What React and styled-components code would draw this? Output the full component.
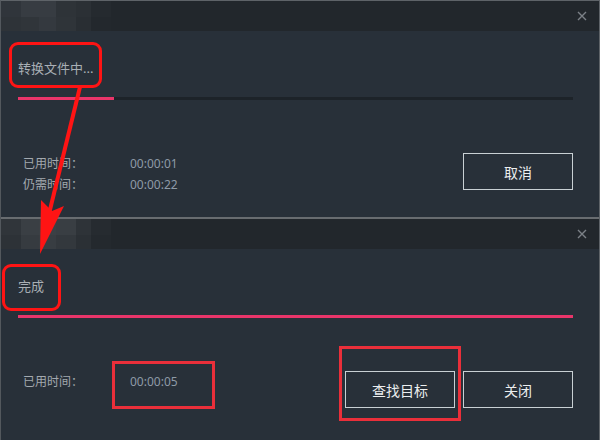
import React from "react";
import styled, { createGlobalStyle } from "styled-components";

const GlobalStyle = createGlobalStyle`
  html, body {
    margin: 0;
    padding: 0;
    background: #283039;
  }
  * {
    box-sizing: border-box;
  }
`;

const CJK = `"Noto Sans", "Noto Sans CJK SC", sans-serif`;

const Stage = styled.div`
  position: relative;
  width: 600px;
  height: 440px;
  overflow: hidden;
  display: flex;
  flex-direction: column;
  background: #283039;
  border-top: 1px solid #5e6368;
  border-left: 1px solid #53585d;
  border-right: 1px solid #5e6368;
  font-family: ${CJK};
`;

const Dialog = styled.div`
  height: ${(p) => p.$height}px;
  display: flex;
  flex-direction: column;
  border-bottom: ${(p) => (p.$divider ? "2px solid #686c70" : "none")};
`;

const TitleBar = styled.div`
  height: 30px;
  flex: none;
  display: flex;
  align-items: center;
  justify-content: space-between;
  background: #22272c;
  padding-right: 11px;
`;

const Mosaic = styled.div`
  display: grid;
  grid-template-columns: 20px 18px 17px 20px 15px 20px;
  grid-template-rows: 16px 14px;
  align-self: stretch;
`;

const Cell = styled.div`
  background: ${(p) => p.$c};
`;

const CloseButton = styled.button`
  border: none;
  background: none;
  padding: 0;
  width: 12px;
  height: 12px;
  display: flex;
  align-items: center;
  justify-content: center;
  color: #7b8187;
`;

const Body = styled.div`
  flex: 1;
  padding: 28px 26px 0 17px;
  display: flex;
  flex-direction: column;
`;

const Status = styled.div`
  font-size: 13px;
  line-height: 18px;
  color: #a9afb5;
`;

const Track = styled.div`
  margin-top: 20px;
  height: 3px;
  background: #1d2329;
`;

const Fill = styled.div`
  height: 100%;
  background: #e9356a;
`;

const Footer = styled.div`
  margin-top: 53px;
  display: flex;
  align-items: flex-start;
  justify-content: space-between;
`;

const Times = styled.div`
  display: grid;
  grid-template-columns: 107px auto;
  padding-left: 5px;
  font-size: 12px;
  line-height: 21px;
`;

const Label = styled.span`
  color: #a3a9af;
`;

const Value = styled.span`
  color: #8e9aa7;
`;

const Buttons = styled.div`
  display: flex;
  gap: 8px;
`;

const Button = styled.button`
  width: 110px;
  height: 37px;
  background: transparent;
  border: 1.5px solid #c9d0d4;
  color: #eceeef;
  font-family: ${CJK};
  font-size: 14px;
  padding: 0;
`;

const Overlay = styled.svg`
  position: absolute;
  left: -1px;
  top: -1px;
  pointer-events: none;
`;

const Mark = styled.div`
  position: absolute;
  left: ${(p) => p.$x}px;
  top: ${(p) => p.$y}px;
  width: ${(p) => p.$w}px;
  height: ${(p) => p.$h}px;
  border: 3px solid ${(p) => (p.$round ? "#ff1414" : "#ea2f3a")};
  border-radius: ${(p) => (p.$round ? "9px" : "0")};
  pointer-events: none;
`;

const mosaicTop = [
  "#30353b", "#373c42", "#373c42", "#2e3338", "#2b3035", "#252a2f",
  "#2e3338", "#30353a", "#34393f", "#2f3439", "#292e33", "#23282d",
];
const mosaicBottom = [
  "#30353a", "#3a3f44", "#3b4045", "#393e43", "#2e3338", "#262b30",
  "#2d3237", "#363b40", "#383d42", "#33383d", "#2b3035", "#24292e",
];

const Close = () => (
  <CloseButton>
    <svg width="10" height="10" viewBox="0 0 10 10">
      <path d="M1 1L9 9M9 1L1 9" stroke="currentColor" strokeWidth="1.4" />
    </svg>
  </CloseButton>
);

const ConvertDialog = ({ height, divider, mosaic, status, progress, times, actions }) => (
  <Dialog $height={height} $divider={divider}>
    <TitleBar>
      <Mosaic>
        {mosaic.map((c, i) => (
          <Cell key={i} $c={c} />
        ))}
      </Mosaic>
      <Close />
    </TitleBar>
    <Body>
      <Status>{status}</Status>
      <Track>
        <Fill style={{ width: `${progress}%` }} />
      </Track>
      <Footer>
        <Times>
          {times.map(([label, value]) => (
            <React.Fragment key={label}>
              <Label>{label}</Label>
              <Value>{value}</Value>
            </React.Fragment>
          ))}
        </Times>
        <Buttons>
          {actions.map((a) => (
            <Button key={a}>{a}</Button>
          ))}
        </Buttons>
      </Footer>
    </Body>
  </Dialog>
);

export default function App() {
  return (
    <>
      <GlobalStyle />
      <Stage>
        <ConvertDialog
          height={218}
          divider
          mosaic={mosaicTop}
          status="转换文件中..."
          progress={17.3}
          times={[
            ["已用时间：", "00:00:01"],
            ["仍需时间：", "00:00:22"],
          ]}
          actions={["取消"]}
        />
        <ConvertDialog
          height={221}
          mosaic={mosaicBottom}
          status="完成"
          progress={100}
          times={[["已用时间：", "00:00:05"]]}
          actions={["查找目标", "关闭"]}
        />

        <Mark $round $x={8} $y={41} $w={93} $h={46} />
        <Mark $round $x={1} $y={263} $w={59} $h={47} />
        <Mark $x={111} $y={360} $w={103} $h={48} />
        <Mark $x={338} $y={345} $w={122} $h={75} />

        <Overlay width="600" height="440" viewBox="0 0 600 440">
          <line x1="80" y1="87" x2="47" y2="222" stroke="#ff1414" strokeWidth="4" />
          <polygon points="41,200 52,211 64,206 40,254" fill="#ff1414" />
        </Overlay>
      </Stage>
    </>
  );
}
